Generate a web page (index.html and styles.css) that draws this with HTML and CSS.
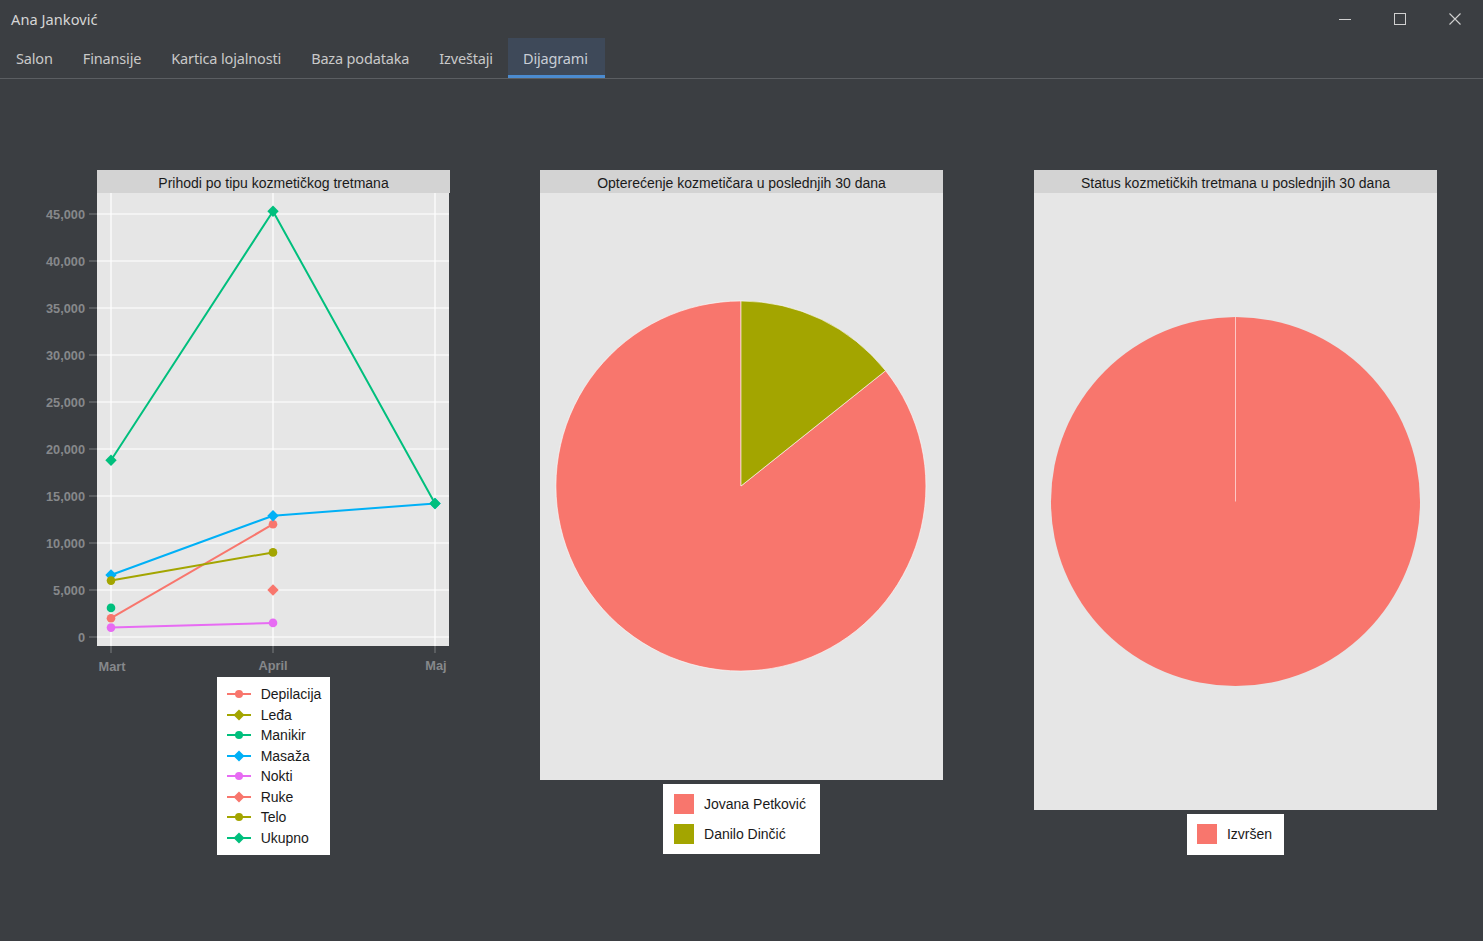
FILE: index.html
```html
<!DOCTYPE html>
<html lang="sr">
<head>
<meta charset="utf-8">
<title>Ana Janković</title>
<link rel="stylesheet" href="styles.css">
</head>
<body>
<div class="window">
  <header class="titlebar">
    <span class="title">Ana Janković</span>
    <div class="controls">
      <span class="ctl"><svg width="14" height="14" viewBox="0 0 14 14"><line x1="1" y1="7.5" x2="13" y2="7.5" stroke="#d0d0d0" stroke-width="1"/></svg></span>
      <span class="ctl"><svg width="14" height="14" viewBox="0 0 14 14"><rect x="1.5" y="1.5" width="11" height="11" fill="none" stroke="#d0d0d0" stroke-width="1"/></svg></span>
      <span class="ctl"><svg width="14" height="14" viewBox="0 0 14 14"><path d="M1.5 1.5 L12.5 12.5 M12.5 1.5 L1.5 12.5" stroke="#d0d0d0" stroke-width="1.1"/></svg></span>
    </div>
  </header>
  <nav class="tabs">
    <span class="tab">Salon</span>
    <span class="tab">Finansije</span>
    <span class="tab">Kartica lojalnosti</span>
    <span class="tab">Baza podataka</span>
    <span class="tab">Izveštaji</span>
    <span class="tab active">Dijagrami</span>
  </nav>
  <main class="content">
    <section class="chart chart-line">
      <svg class="line-svg" width="410" height="507" viewBox="0 0 410 507">
        <rect x="57" y="0" width="353" height="23" fill="#d3d3d3"/>
        <text x="233.5" y="18" class="strip-t" text-anchor="middle">Prihodi po tipu kozmetičkog tretmana</text>
        <rect x="57" y="23" width="352" height="453" fill="#e6e6e6"/>
        <g stroke="#ffffff" stroke-width="1.2">
          <line x1="57" x2="409" y1="467" y2="467"/>
          <line x1="57" x2="409" y1="420" y2="420"/>
          <line x1="57" x2="409" y1="373" y2="373"/>
          <line x1="57" x2="409" y1="326" y2="326"/>
          <line x1="57" x2="409" y1="279" y2="279"/>
          <line x1="57" x2="409" y1="232" y2="232"/>
          <line x1="57" x2="409" y1="185" y2="185"/>
          <line x1="57" x2="409" y1="138" y2="138"/>
          <line x1="57" x2="409" y1="91" y2="91"/>
          <line x1="57" x2="409" y1="44" y2="44"/>
          <line x1="71" x2="71" y1="23" y2="476"/>
          <line x1="233" x2="233" y1="23" y2="476"/>
          <line x1="395" x2="395" y1="23" y2="476"/>
        </g>
        <g stroke="#7a7c7f" stroke-width="1">
          <line x1="49" x2="57" y1="467" y2="467"/>
          <line x1="49" x2="57" y1="420" y2="420"/>
          <line x1="49" x2="57" y1="373" y2="373"/>
          <line x1="49" x2="57" y1="326" y2="326"/>
          <line x1="49" x2="57" y1="279" y2="279"/>
          <line x1="49" x2="57" y1="232" y2="232"/>
          <line x1="49" x2="57" y1="185" y2="185"/>
          <line x1="49" x2="57" y1="138" y2="138"/>
          <line x1="49" x2="57" y1="91" y2="91"/>
          <line x1="49" x2="57" y1="44" y2="44"/>
          <line x1="71" x2="71" y1="476" y2="483"/>
          <line x1="233" x2="233" y1="476" y2="483"/>
          <line x1="395" x2="395" y1="476" y2="483"/>
        </g>
        <g class="axis-t" text-anchor="end">
          <text x="45" y="471.5">0</text>
          <text x="45" y="424.5">5,000</text>
          <text x="45" y="377.5">10,000</text>
          <text x="45" y="330.5">15,000</text>
          <text x="45" y="283.5">20,000</text>
          <text x="45" y="236.5">25,000</text>
          <text x="45" y="189.5">30,000</text>
          <text x="45" y="142.5">35,000</text>
          <text x="45" y="95.5">40,000</text>
          <text x="45" y="48.5">45,000</text>
        </g>
        <g class="axis-t" text-anchor="middle">
          <text x="72" y="501">Mart</text>
          <text x="233" y="500">April</text>
          <text x="396" y="500">Maj</text>
        </g>
        <g fill="none" stroke-width="2" stroke-linejoin="round">
          <polyline points="71,448.2 233,354.2" stroke="#F8766D"/>
          <polyline points="71,405 233,345.7 395,333.5" stroke="#00B0F6"/>
          <polyline points="71,457.6 233,452.9" stroke="#E76BF3"/>
          <polyline points="71,410.6 233,382.4" stroke="#A3A500"/>
          <polyline points="71,290.3 233,41.2 395,333.5" stroke="#00BF7D"/>
        </g>
        <g>
          <circle cx="71" cy="448.2" r="4.3" fill="#F8766D"/>
          <circle cx="233" cy="354.2" r="4.3" fill="#F8766D"/>
          <circle cx="71" cy="437.9" r="4.3" fill="#00BF7D"/>
          <path d="M71 399.3 L76.7 405 L71 410.7 L65.3 405 Z" fill="#00B0F6"/>
          <path d="M233 340 L238.7 345.7 L233 351.4 L227.3 345.7 Z" fill="#00B0F6"/>
          <path d="M395 327.8 L400.7 333.5 L395 339.2 L389.3 333.5 Z" fill="#00B0F6"/>
          <circle cx="71" cy="457.6" r="4.3" fill="#E76BF3"/>
          <circle cx="233" cy="452.9" r="4.3" fill="#E76BF3"/>
          <path d="M233 414.3 L238.7 420 L233 425.7 L227.3 420 Z" fill="#F8766D"/>
          <circle cx="71" cy="410.6" r="4.3" fill="#A3A500"/>
          <circle cx="233" cy="382.4" r="4.3" fill="#A3A500"/>
          <path d="M71 284.6 L76.7 290.3 L71 296 L65.3 290.3 Z" fill="#00BF7D"/>
          <path d="M233 35.5 L238.7 41.2 L233 46.9 L227.3 41.2 Z" fill="#00BF7D"/>
          <path d="M395 327.8 L400.7 333.5 L395 339.2 L389.3 333.5 Z" fill="#00BF7D"/>
        </g>
      </svg>
      <div class="legend-row legend-row-line">
        <ul class="legend legend-lines">
          <li class="lg-item"><svg class="key" width="24" height="20" viewBox="0 0 24 20"><line x1="0" y1="10" x2="24" y2="10" stroke="#F8766D" stroke-width="2"/><circle cx="12" cy="10" r="4" fill="#F8766D"/></svg><span>Depilacija</span></li>
          <li class="lg-item"><svg class="key" width="24" height="20" viewBox="0 0 24 20"><line x1="0" y1="10" x2="24" y2="10" stroke="#A3A500" stroke-width="2"/><path d="M12 4.5 L17.5 10 L12 15.5 L6.5 10 Z" fill="#A3A500"/></svg><span>Leđa</span></li>
          <li class="lg-item"><svg class="key" width="24" height="20" viewBox="0 0 24 20"><line x1="0" y1="10" x2="24" y2="10" stroke="#00BF7D" stroke-width="2"/><circle cx="12" cy="10" r="4" fill="#00BF7D"/></svg><span>Manikir</span></li>
          <li class="lg-item"><svg class="key" width="24" height="20" viewBox="0 0 24 20"><line x1="0" y1="10" x2="24" y2="10" stroke="#00B0F6" stroke-width="2"/><path d="M12 4.5 L17.5 10 L12 15.5 L6.5 10 Z" fill="#00B0F6"/></svg><span>Masaža</span></li>
          <li class="lg-item"><svg class="key" width="24" height="20" viewBox="0 0 24 20"><line x1="0" y1="10" x2="24" y2="10" stroke="#E76BF3" stroke-width="2"/><circle cx="12" cy="10" r="4" fill="#E76BF3"/></svg><span>Nokti</span></li>
          <li class="lg-item"><svg class="key" width="24" height="20" viewBox="0 0 24 20"><line x1="0" y1="10" x2="24" y2="10" stroke="#F8766D" stroke-width="2"/><path d="M12 4.5 L17.5 10 L12 15.5 L6.5 10 Z" fill="#F8766D"/></svg><span>Ruke</span></li>
          <li class="lg-item"><svg class="key" width="24" height="20" viewBox="0 0 24 20"><line x1="0" y1="10" x2="24" y2="10" stroke="#A3A500" stroke-width="2"/><circle cx="12" cy="10" r="4" fill="#A3A500"/></svg><span>Telo</span></li>
          <li class="lg-item"><svg class="key" width="24" height="20" viewBox="0 0 24 20"><line x1="0" y1="10" x2="24" y2="10" stroke="#00BF7D" stroke-width="2"/><path d="M12 4.5 L17.5 10 L12 15.5 L6.5 10 Z" fill="#00BF7D"/></svg><span>Ukupno</span></li>
        </ul>
      </div>
    </section>

    <section class="chart chart-pie">
      <div class="strip">Opterećenje kozmetičara u poslednjih 30 dana</div>
      <div class="panel panel-mid">
        <svg width="403" height="587" viewBox="0 0 403 587">
          <path d="M201 293 L345.6 177.7 A185 185 0 1 1 201 108 Z" fill="#F8766D" stroke="#ffffff" stroke-width="0.6"/>
          <path d="M201 293 L201 108 A185 185 0 0 1 345.6 177.7 Z" fill="#A3A500" stroke="#ffffff" stroke-width="0.6"/>
        </svg>
      </div>
      <div class="legend-row">
        <ul class="legend legend-fill">
          <li class="lg-item"><span class="swatch sw-salmon"></span><span>Jovana Petković</span></li>
          <li class="lg-item"><span class="swatch sw-olive"></span><span>Danilo Dinčić</span></li>
        </ul>
      </div>
    </section>

    <section class="chart chart-pie">
      <div class="strip">Status kozmetičkih tretmana u poslednjih 30 dana</div>
      <div class="panel panel-tall">
        <svg width="403" height="617" viewBox="0 0 403 617">
          <circle cx="201.5" cy="308.5" r="184.5" fill="#F8766D"/>
          <line x1="201.5" y1="124" x2="201.5" y2="308.5" stroke="#ffffff" stroke-width="0.6"/>
        </svg>
      </div>
      <div class="legend-row">
        <ul class="legend legend-fill legend-single">
          <li class="lg-item"><span class="swatch sw-salmon"></span><span>Izvršen</span></li>
        </ul>
      </div>
    </section>
  </main>
</div>
</body>
</html>
```

FILE: styles.css
```css
* { box-sizing: border-box; }
html, body {
  margin: 0;
  padding: 0;
  width: 1483px;
  height: 941px;
  overflow: hidden;
  background: #3b3e42;
}
.window {
  width: 1483px;
  height: 941px;
  background: #3b3e42;
  font-family: "Noto Sans", "Open Sans", sans-serif;
  color: #d2d2d2;
}
.titlebar {
  height: 38px;
  display: flex;
  align-items: center;
  justify-content: space-between;
  padding-left: 11px;
  padding-right: 1px;
}
.title {
  font-size: 14.6px;
  color: #d6d6d6;
  letter-spacing: 0.05px;
}
.controls {
  display: flex;
  height: 38px;
  align-items: center;
}
.ctl {
  width: 55px;
  height: 38px;
  display: flex;
  align-items: center;
  justify-content: center;
}
.ctl svg { display: block; }
.tabs {
  height: 41px;
  display: flex;
  padding-left: 1px;
  border-bottom: 1px solid #5b5e62;
}
.tab {
  height: 40px;
  display: flex;
  align-items: center;
  padding: 0 15px;
  font-size: 14.5px;
  color: #c9c9c9;
  letter-spacing: -0.16px;
}
.tab.active {
  background: #3e4959;
  box-shadow: inset 0 -3px 0 #4b8bd0;
  color: #c9ced6;
  padding: 0 17px 0 15px;
}
.content {
  display: flex;
  align-items: flex-start;
  padding: 91px 0 0 40px;
  gap: 90px;
}
.chart { display: flex; flex-direction: column; }
.chart-line { width: 410px; }
.line-svg { display: block; }
.strip-t {
  font-family: "Liberation Sans", Arial, sans-serif;
  font-size: 14px;
  fill: #1a1a1a;
}
.axis-t {
  font-family: "Liberation Sans", Arial, sans-serif;
  font-size: 12.75px;
  font-weight: bold;
  fill: #86888b;
}
.legend-row {
  display: flex;
  justify-content: center;
  margin-top: 4px;
}
.legend-row-line {
  margin-top: 0;
  padding-left: 57px;
}
.legend {
  list-style: none;
  margin: 0;
  background: #ffffff;
  font-family: "Liberation Sans", Arial, sans-serif;
  font-size: 14px;
  color: #1a1a1a;
}
.legend-lines {
  padding: 7px 9px 7px 10px;
}
.legend-lines .lg-item {
  height: 20.5px;
  display: flex;
  align-items: center;
  gap: 10px;
}
.key { display: block; flex: none; }
.legend-fill {
  padding: 5px 14px 5px 11px;
}
.legend-fill .lg-item {
  height: 30px;
  display: flex;
  align-items: center;
  gap: 10px;
}
.legend-fill.legend-single {
  padding: 5px 12px 6px 10px;
}
.swatch {
  width: 20px;
  height: 20px;
  flex: none;
}
.sw-salmon { background: #F8766D; }
.sw-olive { background: #A3A500; }
.chart-pie { width: 403px; }
.chart-pie + .chart-pie { margin-left: 1px; }
.strip {
  height: 23px;
  background: #d3d3d3;
  font-family: "Liberation Sans", Arial, sans-serif;
  font-size: 14px;
  color: #1a1a1a;
  text-align: center;
  line-height: 26px;
}
.panel { background: #e6e6e6; }
.panel svg { display: block; }
.panel-mid { height: 587px; }
.panel-tall { height: 617px; }
```
